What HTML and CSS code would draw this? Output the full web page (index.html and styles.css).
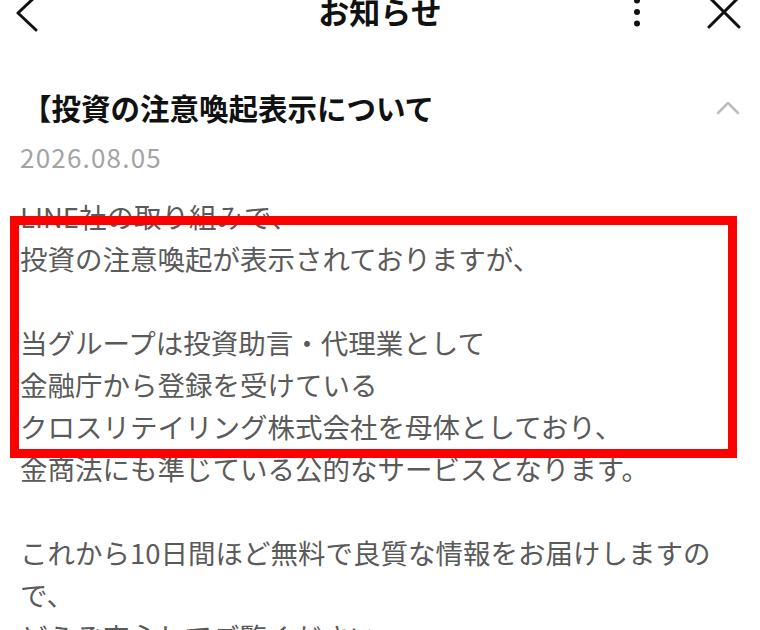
FILE: index.html
```html
<!DOCTYPE html>
<html lang="ja">
<head>
<meta charset="utf-8">
<title>お知らせ</title>
<link rel="stylesheet" href="styles.css">
</head>
<body>
<div class="page">
  <header class="topbar">
    <svg class="icon-back" width="24" height="42" viewBox="0 0 24 42" aria-hidden="true">
      <path d="M22 5 L4 22 L22 39" fill="none" stroke="#111" stroke-width="3" stroke-linecap="round" stroke-linejoin="round"/>
    </svg>
    <h1 class="topbar-title">お知らせ</h1>
    <div class="topbar-actions">
      <svg class="icon-more" width="10" height="30" viewBox="0 0 10 30" aria-hidden="true">
        <circle cx="5" cy="3.5" r="3" fill="#111"/>
        <circle cx="5" cy="15" r="3" fill="#111"/>
        <circle cx="5" cy="26.5" r="3" fill="#111"/>
      </svg>
      <svg class="icon-close" width="36" height="36" viewBox="0 0 36 36" aria-hidden="true">
        <path d="M3 3 L33 33 M33 3 L3 33" fill="none" stroke="#111" stroke-width="3" stroke-linecap="round"/>
      </svg>
    </div>
  </header>

  <section class="notice">
    <div class="notice-head">
      <h2 class="notice-title">【投資の注意喚起表示について</h2>
      <svg class="icon-up" width="24" height="14" viewBox="0 0 24 14" aria-hidden="true">
        <path d="M2 12 L12 2 L22 12" fill="none" stroke="#bdbdbd" stroke-width="2.5" stroke-linecap="round" stroke-linejoin="round"/>
      </svg>
    </div>
    <div class="notice-date">2026.08.05</div>
    <div class="notice-body">
      <p class="para">LINE社の取り組みで、<br>投資の注意喚起が表示されておりますが、</p>
      <p class="para">当グループは投資助言・代理業として<br>金融庁から登録を受けている<br>クロスリテイリング株式会社を母体としており、<br>金商法にも準じている公的なサービスとなります。</p>
      <p class="para">これから10日間ほど無料で良質な情報をお届けしますの<br>で、<br>どうぞ安心してご覧ください。</p>
      <div class="highlight"></div>
    </div>
  </section>
</div>
</body>
</html>
```
FILE: styles.css
```css
html, body {
  margin: 0;
  padding: 0;
  background: #ffffff;
}

body {
  font-family: "Noto Sans CJK JP", "Noto Sans", "Liberation Sans", sans-serif;
  color: #111;
}

.page {
  width: 760px;
  height: 630px;
  overflow: hidden;
}

.topbar {
  display: grid;
  grid-template-columns: 1fr auto 1fr;
  grid-template-rows: 24px;
  align-items: center;
  height: 24px;
  padding: 0 14px;
}

.icon-back {
  display: block;
  justify-self: start;
}

.topbar-title {
  margin: 0;
  font-size: 31px;
  line-height: 36px;
  font-weight: 700;
  color: #111;
  position: relative;
  top: -1px;
}

.topbar-actions {
  justify-self: end;
  display: flex;
  align-items: center;
  gap: 64px;
  margin-right: 4px;
}

.icon-more,
.icon-close {
  display: block;
}

.notice {
  margin-top: 63px;
}

.notice-head {
  display: flex;
  align-items: center;
  justify-content: space-between;
  padding: 0 20px 0 22px;
}

.notice-title {
  margin: 0;
  font-size: 29.5px;
  line-height: 40px;
  font-weight: 700;
  color: #111;
}

.icon-up {
  display: block;
  margin-top: 2px;
}

.notice-date {
  margin-top: 14px;
  padding-left: 20px;
  font-size: 26px;
  line-height: 32px;
  letter-spacing: 1.2px;
  color: #a3a3a3;
}

.notice-body {
  position: relative;
  margin-top: 22px;
  padding-left: 20px;
  font-size: 27.5px;
  line-height: 42px;
  color: #5a5a5a;
}

.para {
  margin: 0 0 42px 0;
  white-space: nowrap;
}

.highlight {
  position: absolute;
  left: 10px;
  top: 21px;
  width: 709px;
  height: 224px;
  border: 9px solid #ff0000;
  pointer-events: none;
}
```
